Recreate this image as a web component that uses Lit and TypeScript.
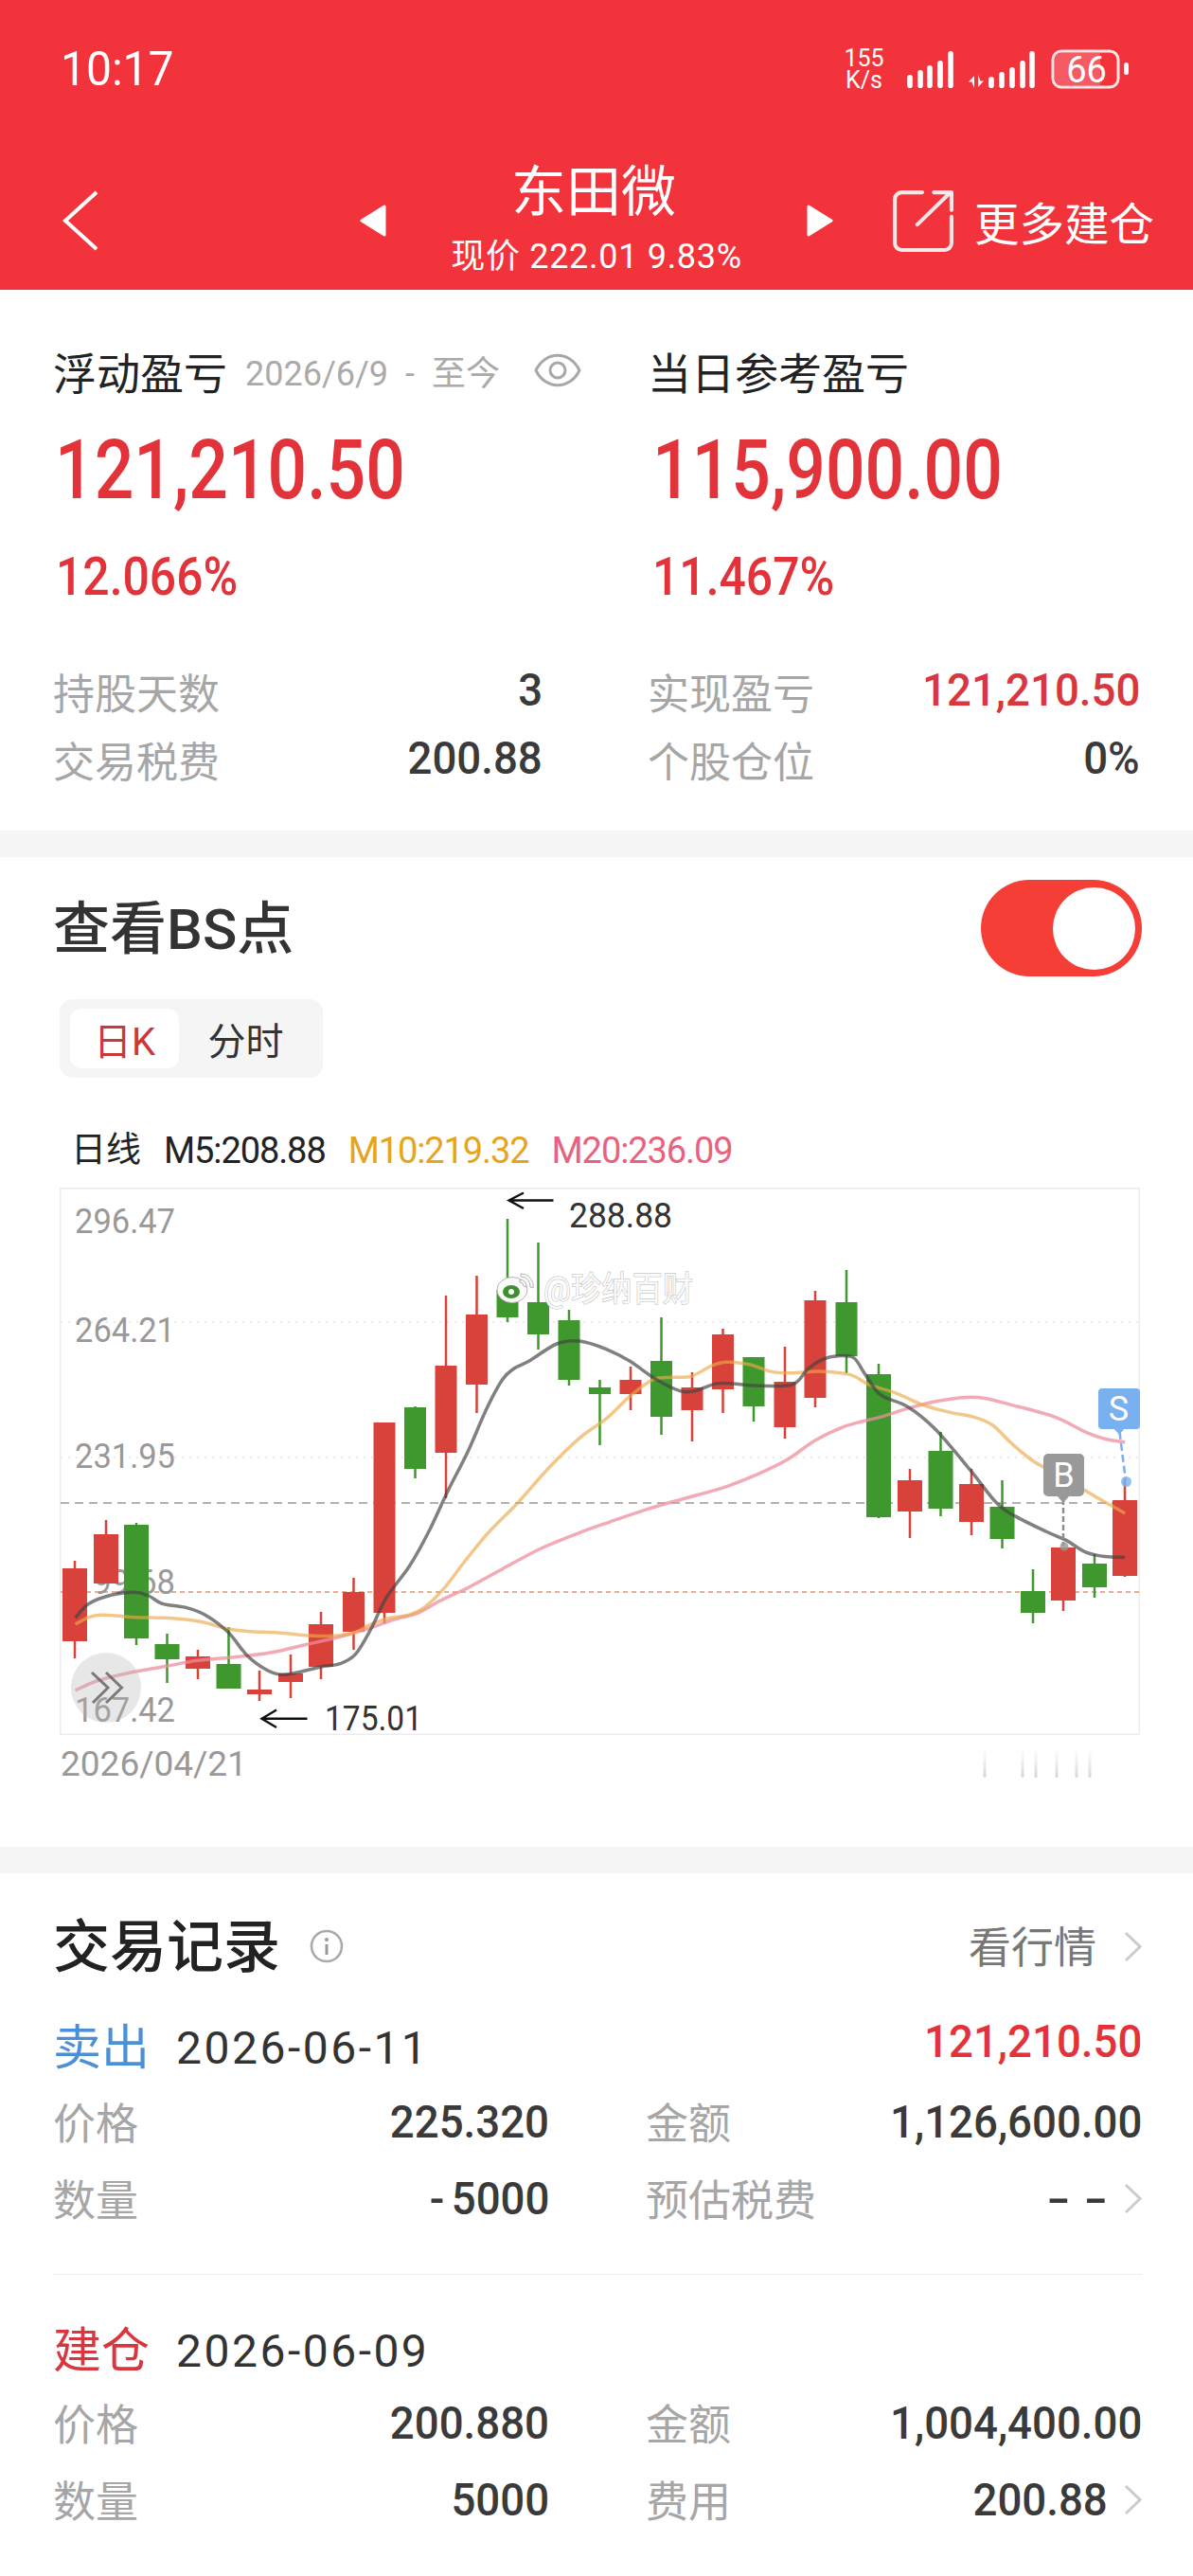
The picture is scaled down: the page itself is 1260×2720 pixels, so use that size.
import { LitElement, html, svg, css } from 'lit';
import { customElement } from 'lit/decorators.js';

type Pt = number[];

// reference crops of the chart: left half and right half
const L = (x: number, y: number): Pt => [x / 2.45, 1440 + y / 3];
const R = (x: number, y: number): Pt => [620 + x / 2.45, 1180 + y / 2.8];

// x, body top, body bottom, wick top, wick bottom, colour, body width
const CANDLES: [number, number, number, number, number, string, number][] = [
  [79, 1656, 1733, 1648, 1751, 'r', 26],
  [112, 1620, 1672, 1605, 1672, 'r', 26],
  [144, 1610, 1730, 1608, 1737, 'g', 26],
  [176.5, 1736, 1752, 1725, 1777, 'g', 26],
  [209, 1749, 1762, 1742, 1773, 'r', 26],
  [241.5, 1757, 1783, 1718, 1783, 'g', 26],
  [274, 1784, 1789, 1764, 1796, 'r', 26],
  [307, 1767, 1776, 1747, 1793, 'r', 26],
  [339, 1715, 1760, 1702, 1773, 'r', 26],
  [373.5, 1681, 1723, 1666, 1742, 'r', 23],
  [406, 1502, 1703, 1502, 1714, 'r', 23],
  [438.5, 1486, 1551, 1485, 1561, 'g', 23],
  [471, 1442, 1534, 1368, 1582, 'r', 23],
  [503.5, 1388, 1462, 1347, 1492, 'r', 23],
  [536, 1362, 1391, 1287, 1396, 'g', 23],
  [568.5, 1375, 1409, 1312, 1425, 'g', 23],
  [601, 1394, 1457, 1383, 1463, 'g', 23],
  [633.5, 1465, 1472, 1457, 1526, 'g', 23],
  [666, 1457, 1472, 1443, 1489, 'r', 23],
  [698.5, 1437, 1496, 1391, 1515, 'g', 23],
  [731, 1465, 1489, 1449, 1522, 'r', 23],
  [763.5, 1409, 1467, 1403, 1492, 'r', 23],
  [796, 1433, 1485, 1433, 1501, 'g', 23],
  [829, 1459, 1507, 1422, 1519, 'r', 23],
  [861, 1373, 1476, 1363, 1486, 'r', 23],
  [894, 1375, 1432, 1341, 1450, 'g', 23],
  [928, 1451, 1602, 1440, 1603, 'g', 26],
  [961, 1563, 1596, 1551, 1624, 'r', 26],
  [993.5, 1532, 1593, 1512, 1601, 'g', 26],
  [1026, 1567, 1607, 1551, 1621, 'r', 26],
  [1058.5, 1591, 1625, 1563, 1635, 'g', 26],
  [1091, 1680, 1703, 1657, 1714, 'g', 26],
  [1123, 1634, 1690, 1634, 1701, 'r', 26],
  [1156, 1651, 1676, 1641, 1687, 'g', 26],
  [1188, 1584, 1664, 1561, 1665, 'r', 26],
];

const M5: Pt[] = [
  L(195, 805), L(230, 760), L(290, 732), L(350, 724), L(385, 735), L(420, 760), L(480, 772), L(530, 795),
  L(590, 850), L(640, 925), L(690, 970), L(730, 985), L(780, 975), L(830, 960), L(880, 950), L(920, 920),
  L(960, 840), L(1000, 740), L(1060, 640), L(1110, 530), L(1160, 400), L(1210, 280), L(1260, 140), L(1300, 50),
  L(1330, 15), [559, 1437], [588, 1419], [612, 1416],
  R(50, 685), R(110, 720), R(180, 775), R(240, 808), R(280, 808), R(330, 788), R(370, 786), R(430, 792),
  R(530, 790), R(570, 745), R(610, 715), R(650, 705), R(690, 710), R(720, 760), R(760, 820), R(830, 855),
  R(900, 920), R(990, 1040), R(1060, 1140), R(1110, 1180), R(1190, 1225), R(1240, 1250), R(1290, 1285),
  R(1340, 1298), R(1392, 1300),
];

const M10: Pt[] = [
  L(195, 825), L(230, 803), L(260, 796), L(300, 798), L(350, 803), L(420, 805), L(480, 810), L(530, 820),
  L(590, 840), L(650, 848), L(720, 852), L(790, 860), L(860, 862), L(920, 850), L(960, 825), L(1010, 805),
  L(1060, 795), L(1100, 770), L(1150, 710), L(1200, 630), L(1260, 540), L(1340, 440), L(1420, 330), L(1500, 235),
  R(50, 890), R(110, 825), R(170, 775), R(220, 768), R(270, 765), R(320, 735), R(360, 723), R(420, 730),
  R(480, 752), R(540, 755), R(600, 750), R(680, 760), R(730, 790), R(800, 815), R(870, 850), R(940, 872),
  R(1000, 885), R(1050, 910), R(1100, 965), R(1160, 1020), R(1230, 1060), R(1300, 1110), R(1392, 1170),
];

const M20: Pt[] = [
  L(195, 1035), L(250, 1005), L(330, 980), L(430, 958), L(510, 940), L(600, 930), L(700, 915), L(790, 890),
  L(870, 868), L(950, 840), L(1020, 810), L(1080, 790), L(1140, 750), L(1210, 710), L(1300, 650), L(1400, 585),
  L(1500, 535), R(60, 1195), R(150, 1160), R(240, 1130), R(350, 1095), R(440, 1055), R(520, 1010), R(590, 955),
  R(670, 912), R(760, 885), R(830, 860), R(900, 840), R(980, 827), R(1030, 830), R(1100, 850), R(1210, 885),
  R(1290, 930), R(1340, 950), R(1392, 960),
];

// catmull-rom through the points, as cubic segments
function smooth(p: Pt[]): string {
  let d = `M${p[0][0].toFixed(1)} ${p[0][1].toFixed(1)}`;
  for (let i = 0; i < p.length - 1; i++) {
    const a = p[Math.max(i - 1, 0)];
    const b = p[i];
    const c = p[i + 1];
    const e = p[Math.min(i + 2, p.length - 1)];
    const c1 = [b[0] + (c[0] - a[0]) / 6, b[1] + (c[1] - a[1]) / 6];
    const c2 = [c[0] - (e[0] - b[0]) / 6, c[1] - (e[1] - b[1]) / 6];
    d += `C${c1[0].toFixed(1)} ${c1[1].toFixed(1)} ${c2[0].toFixed(1)} ${c2[1].toFixed(1)} ${c[0].toFixed(1)} ${c[1].toFixed(1)}`;
  }
  return d;
}

const AXIS: [string, number][] = [
  ['296.47', 1302],
  ['264.21', 1417],
  ['231.95', 1550],
  ['199.68', 1683],
  ['167.42', 1818],
];

const chevron = html`<svg class="chev" viewBox="0 0 19 33"><path d="M2 2L17 16.5L2 31" /></svg>`;

@customElement('app-root')
export class AppRoot extends LitElement {
  static styles = css`
    :host {
      display: block;
      width: 1260px;
      height: 2720px;
      background: #fff;
      font-family: Roboto, 'Noto Sans CJK SC', sans-serif;
      color: #333;
      overflow: hidden;
    }

    .n {
      display: inline-block;
      transform-origin: right center;
      transform: scaleX(0.95);
      white-space: nowrap;
    }

    .header {
      height: 306px;
      background: #f3333c;
      color: #fff;
      overflow: hidden;
    }
    .status {
      display: flex;
      align-items: center;
      height: 50px;
      margin-top: 48px;
      padding-left: 64px;
    }
    .time {
      font-size: 50px;
      line-height: 50px;
      transform: scaleX(0.96);
      transform-origin: left center;
    }
    .net {
      margin-left: auto;
      margin-right: 21px;
      font-size: 25px;
      line-height: 23px;
      text-align: center;
      width: 43px;
    }
    .status-icons {
      display: block;
      width: 240px;
      height: 48px;
      margin-right: 65px;
    }
    .nav {
      display: flex;
      align-items: center;
      height: 122px;
      margin-top: 74px;
    }
    .back {
      width: 38px;
      height: 64px;
      margin-left: 66px;
    }
    .tri {
      width: 28px;
      height: 34px;
      flex: none;
    }
    .tri.prev {
      margin-left: 276px;
    }
    .center {
      width: 444px;
      text-align: center;
    }
    .name {
      font-size: 58px;
      line-height: 70px;
      margin-top: -6px;
      margin-right: 6px;
    }
    .sub {
      font-size: 36px;
      line-height: 44px;
      margin-top: 11px;
      letter-spacing: 0.7px;
    }
    .share {
      width: 66px;
      height: 66px;
      margin-left: 62px;
      flex: none;
    }
    .more {
      font-size: 47.5px;
      margin-left: 21px;
      white-space: nowrap;
    }

    .band {
      height: 28px;
      background: #f5f5f5;
    }

    .summary {
      display: grid;
      grid-template-columns: 516px 519px;
      column-gap: 112px;
      padding: 55px 0 0 56px;
      height: 571px;
      box-sizing: border-box;
    }
    .cell {
      min-width: 0;
    }
    .cap {
      display: flex;
      align-items: center;
      height: 60px;
      font-size: 46px;
      color: #222;
      white-space: nowrap;
    }
    .since {
      font-size: 36px;
      color: #aaa;
      margin-left: 19px;
      word-spacing: 9px;
      flex: none;
    }
    .eye {
      width: 50px;
      height: 36px;
      margin-left: 36px;
      flex: none;
    }
    .big {
      height: 100px;
      margin-top: 25px;
      font-size: 87px;
      line-height: 100px;
      font-weight: 500;
      color: #e2333a;
      padding-left: 2px;
    }
    .big .n,
    .pct .n {
      transform-origin: left center;
    }
    .big .n {
      transform: scaleX(0.842);
    }
    .pct {
      height: 70px;
      margin-top: 28px;
      font-size: 56px;
      line-height: 70px;
      font-weight: 500;
      color: #e2333a;
      padding-left: 3px;
    }
    .pct .n {
      transform: scaleX(0.89);
    }
    .alt .big {
      padding-left: 5px;
    }
    .alt .pct {
      padding-left: 5px;
    }
    .stats {
      margin-top: 54px;
    }
    .stat {
      display: flex;
      justify-content: space-between;
      align-items: flex-start;
      height: 72px;
      font-size: 44px;
      line-height: 72px;
      color: #a6a6a6;
    }
    .stat b {
      font-size: 48px;
      line-height: 62px;
      font-weight: 500;
      color: #3a3a3a;
      margin-right: -1px;
    }
    .red {
      color: #d8373f !important;
    }

    .bs {
      height: 1045px;
      padding-top: 24px;
      box-sizing: border-box;
    }
    .bs-head {
      display: flex;
      align-items: center;
      justify-content: space-between;
      height: 102px;
      padding: 0 54px 0 56px;
    }
    .bs-title {
      font-size: 60px;
      font-weight: 500;
      color: #333;
      margin-top: -10px;
    }
    .toggle {
      display: flex;
      align-items: center;
      justify-content: flex-end;
      width: 170px;
      height: 102px;
      border-radius: 51px;
      background: #f43e36;
      padding-right: 7px;
      box-sizing: border-box;
    }
    .knob {
      width: 87px;
      height: 87px;
      border-radius: 50%;
      background: #fff;
    }
    .seg {
      display: flex;
      width: 278px;
      height: 83px;
      margin: 24px 0 0 63px;
      padding: 10px 11px;
      box-sizing: border-box;
      background: #f5f5f5;
      border-radius: 14px;
    }
    .tab {
      flex: 1;
      display: flex;
      align-items: center;
      justify-content: center;
      font-size: 40px;
      color: #333;
      border-radius: 12px;
    }
    .tab.on {
      flex: none;
      width: 115px;
      background: #fff;
      color: #c9383a;
    }
    .legend {
      display: flex;
      gap: 24px;
      height: 40px;
      margin-top: 57px;
      padding-left: 75px;
      font-size: 38px;
      line-height: 40px;
      letter-spacing: -1.1px;
      color: #222;
      white-space: nowrap;
    }
    .legend .cn {
      font-size: 37px;
      letter-spacing: 0;
    }
    .m10 {
      color: #e6a520;
    }
    .m20 {
      color: #e8627f;
    }
    .chart {
      display: block;
      width: 1141px;
      height: 578px;
      margin: 19px 0 0 63px;
    }
    .frame {
      fill: none;
      stroke: #ececec;
      stroke-width: 1.5;
    }
    .axis {
      font-size: 36px;
      fill: #999;
    }
    .note {
      font-size: 36px;
      fill: #333;
    }
    .mark {
      font-size: 36px;
      fill: #fff;
      text-anchor: middle;
    }
    .wm {
      font-size: 36px;
      fill: #fafafa;
      stroke: #b4b4b4;
      stroke-width: 1;
      paint-order: stroke;
    }
    .date-row {
      display: flex;
      justify-content: space-between;
      padding: 0 0 0 64px;
      height: 62px;
      font-size: 37px;
      line-height: 62px;
      color: #999;
    }
    .scrub {
      display: block;
      width: 120px;
      height: 36px;
      margin: 11px 104px 0 0;
    }

    .trades {
      padding: 47px 54px 0 56px;
    }
    .trades-head {
      display: flex;
      align-items: center;
      height: 60px;
    }
    .trades-title {
      font-size: 60px;
      font-weight: 500;
      color: #222;
      margin-top: -10px;
    }
    .info {
      width: 36px;
      height: 36px;
      margin-left: 31px;
    }
    .link {
      margin-left: auto;
      font-size: 45px;
      color: #777;
      margin-top: -4px;
    }
    .chev {
      display: block;
      width: 19px;
      height: 33px;
      flex: none;
      margin-left: 29px;
    }
    .chev path {
      fill: none;
      stroke: #ccc;
      stroke-width: 3;
    }
    .trade {
      padding-top: 48px;
    }
    .trade + .trade {
      border-top: 1.5px solid #eee;
      margin-top: 39px;
      padding-top: 51px;
    }
    .trade-head {
      display: flex;
      align-items: flex-start;
      height: 60px;
      line-height: 60px;
    }
    .kind {
      font-size: 51px;
      width: 130px;
    }
    .sell {
      color: #4a90d9;
    }
    .buy {
      color: #d8373f;
    }
    .day {
      font-size: 48px;
      letter-spacing: 2.5px;
      color: #333;
    }
    .profit {
      margin-left: auto;
      margin-top: -7px;
      font-size: 48px;
      font-weight: 500;
      color: #e2333a;
    }
    .rows {
      display: grid;
      grid-template-columns: 524px 524px;
      column-gap: 102px;
      margin-top: 7px;
    }
    .trade + .trade .rows {
      margin-top: 5px;
    }
    .row {
      display: flex;
      align-items: center;
      height: 81px;
      font-size: 45px;
      color: #a6a6a6;
      white-space: nowrap;
    }
    .row > span {
      margin-top: -3px;
    }
    .row b {
      margin-left: auto;
      font-size: 48px;
      font-weight: 500;
      color: #3a3a3a;
    }
    .row .chev {
      margin-left: 17px;
    }
    .minus {
      letter-spacing: 8px;
    }
    .dash {
      letter-spacing: 10px;
      transform: scaleX(1.5);
      margin-right: -15px;
    }
  `;

  private stat(label: string, value: string, red = false) {
    return html`<div class="stat">
      <span>${label}</span><b class=${red ? 'red' : ''}><span class="n">${value}</span></b>
    </div>`;
  }

  private row(label: string, value: string, more = false) {
    const text = value.startsWith('-') && value !== '--' ? html`<span class="minus">-</span>${value.slice(1)}` : value;
    return html`<div class="row">
      <span>${label}</span><b><span class="n ${value === '--' ? 'dash' : ''}">${text}</span></b>${more ? chevron : ''}
    </div>`;
  }

  private renderHeader() {
    return html`<div class="header">
      <div class="status">
        <span class="time">10:17</span>
        <div class="net">155<br />K/s</div>
        <svg class="status-icons" viewBox="955 48 240 48">
          <g fill="#fff">
            ${[[961, 78], [972, 73], [982, 68], [993, 63], [1004, 53]].map(
              ([x, y]) => svg`<rect x=${x - 2.8} y=${y} width="5.6" height=${92 - y} rx="2.8" />`,
            )}
            ${[[1047, 80], [1058, 75], [1069, 70], [1080, 63], [1090, 53]].map(
              ([x, y]) => svg`<rect x=${x - 2.8} y=${y} width="5.6" height=${92 - y} rx="2.8" />`,
            )}
            <path d="M1029 92V79l-6 6.5h3.5zM1033 78v13l6-6.5h-3.5z" />
            <rect x="1187" y="65" width="5" height="13" rx="2.5" />
          </g>
          <rect x="1112" y="53" width="69" height="38" rx="9" fill="none" stroke="#fde3e5" stroke-width="3" />
          <path d="M1121 55H1162V89H1121a7 7 0 0 1-7-7V62a7 7 0 0 1 7-7z" fill="#fff" opacity=".2" />
          <text x="1147.5" y="86" text-anchor="middle" font-size="38" fill="#fff">66</text>
        </svg>
      </div>
      <div class="nav">
        <svg class="back" viewBox="0 0 38 64">
          <path d="M36 2L3 32L36 62" fill="none" stroke="#fff" stroke-width="4" />
        </svg>
        <svg class="tri prev" viewBox="0 0 28 34">
          <path d="M26 2V32L2 17Z" fill="#fff" stroke="#fff" stroke-width="3" stroke-linejoin="round" />
        </svg>
        <div class="center">
          <div class="name">东田微</div>
          <div class="sub">现价 222.01 9.83%</div>
        </div>
        <svg class="tri" viewBox="0 0 28 34">
          <path d="M2 2V32L26 17Z" fill="#fff" stroke="#fff" stroke-width="3" stroke-linejoin="round" />
        </svg>
        <svg class="share" viewBox="0 0 64 64">
          <path
            d="M31 3H10a7 7 0 0 0-7 7V55a7 7 0 0 0 7 7H54a7 7 0 0 0 7-7V28M26 36L60 3M43 3H61V21"
            fill="none"
            stroke="#fde6e7"
            stroke-width="4"
            stroke-linecap="round"
            stroke-linejoin="round"
          />
        </svg>
        <span class="more">更多建仓</span>
      </div>
    </div>`;
  }

  private renderSummary() {
    return html`<div class="summary">
      <div class="cell">
        <div class="cap">
          浮动盈亏<span class="since">2026/6/9 - 至今</span>
          <svg class="eye" viewBox="0 0 50 36">
            <path d="M2 18C12-3 38-3 48 18C38 39 12 39 2 18Z" fill="none" stroke="#a8a8a8" stroke-width="3" />
            <circle cx="25" cy="18" r="8" fill="none" stroke="#a8a8a8" stroke-width="3" />
          </svg>
        </div>
        <div class="big"><span class="n">121,210.50</span></div>
        <div class="pct"><span class="n">12.066%</span></div>
        <div class="stats">${this.stat('持股天数', '3')} ${this.stat('交易税费', '200.88')}</div>
      </div>
      <div class="cell alt">
        <div class="cap">当日参考盈亏</div>
        <div class="big"><span class="n">115,900.00</span></div>
        <div class="pct"><span class="n">11.467%</span></div>
        <div class="stats">${this.stat('实现盈亏', '121,210.50', true)} ${this.stat('个股仓位', '0%')}</div>
      </div>
    </div>`;
  }

  private renderChart() {
    return html`<svg class="chart" viewBox="63 1254 1141 578">
      <rect class="frame" x="63.75" y="1254.75" width="1139.5" height="576.5" />
      <g stroke="#ececec" stroke-width="2" stroke-dasharray="2 6">
        <path d="M64 1396H1203M64 1539H1203" />
      </g>
      <path d="M64 1587H1203" stroke="#9a9a90" stroke-width="1.6" stroke-dasharray="9 6" />
      <path d="M64 1681H1203" stroke="#e2946c" stroke-width="1.6" stroke-dasharray="5 4" />
      ${AXIS.map(
        ([t, y]) => svg`<text class="axis" x="79" y=${y} textLength="106" lengthAdjust="spacingAndGlyphs">${t}</text>`,
      )}
      ${CANDLES.map(([x, top, bottom, wickTop, wickBottom, c, w]) => {
        const fill = c === 'r' ? '#d9423a' : '#3f982d';
        return svg`<rect x=${x - 1.25} y=${wickTop} width="2.5" height=${wickBottom - wickTop} fill=${fill} />
          <rect x=${x - w / 2} y=${top} width=${w} height=${bottom - top} fill=${fill} />`;
      })}
      <g fill="none" stroke-width="3.5" stroke-linejoin="round">
        <path d=${smooth(M20)} stroke="#ee8e9c" opacity=".75" />
        <path d=${smooth(M10)} stroke="#eba94a" opacity=".65" />
        <path d=${smooth(M5)} stroke="#444" opacity=".68" />
      </g>

      <path d="M553 1259.5L537.5 1267.5L553 1276M538 1267.5H584.5" fill="none" stroke="#111" stroke-width="2.4" />
      <text class="note" x="601" y="1296" textLength="109" lengthAdjust="spacingAndGlyphs">288.88</text>
      <path d="M292 1805.5L276.5 1814.7L292 1824M277 1814.7H324.5" fill="none" stroke="#111" stroke-width="2.4" />
      <text class="note" x="343" y="1827" textLength="103" lengthAdjust="spacingAndGlyphs">175.01</text>

      <circle cx="112" cy="1782" r="37" fill="#b4b4b4" opacity=".32" />
      <path d="M97 1766L114 1782L98 1798M112 1766L128.5 1782L112 1798" fill="none" stroke="#666" stroke-width="3" opacity=".85" />

      <path d="M1123 1583V1632" stroke="#8c8c8c" stroke-width="2.5" stroke-dasharray="6 3" />
      <circle cx="1124" cy="1633" r="4.5" fill="#999" opacity=".8" />
      <path d="M1123 1587L1117 1580H1129Z" fill="#999" />
      <rect x="1102" y="1535" width="43" height="45" rx="5" fill="#999" />
      <text class="mark" x="1123.5" y="1570">B</text>

      <path d="M1182.5 1512L1189 1564" stroke="#7ab0ef" stroke-width="2.5" stroke-dasharray="8 4" />
      <circle cx="1189.5" cy="1564.5" r="5.5" fill="#7ab0ef" opacity=".8" />
      <path d="M1182 1515L1176 1508H1188Z" fill="#78b0f0" />
      <rect x="1160" y="1466" width="44" height="43" rx="4" fill="#78b0f0" />
      <text class="mark" x="1181.5" y="1500">S</text>

      <g fill="#fafafa" stroke="#b4b4b4" stroke-width="1">
        <ellipse cx="541" cy="1362" rx="16" ry="13.5" />
        <path d="M550 1345a13 13 0 0 1 13 15l-3-1a10 10 0 0 0-10-11zM549 1351a7 7 0 0 1 7 8l-3-1a4 4 0 0 0-4-4z" />
      </g>
      <ellipse cx="540" cy="1364" rx="9" ry="7" fill="#3f8f30" />
      <circle cx="540" cy="1364" r="3" fill="#fafafa" />
      <text class="wm" x="574" y="1374" textLength="158" lengthAdjust="spacingAndGlyphs">@珍纳百财</text>
    </svg>`;
  }

  private renderTrade(kind: string, cls: string, day: string, profit: string, rows: unknown) {
    return html`<div class="trade">
      <div class="trade-head">
        <span class="kind ${cls}">${kind}</span>
        <span class="day">${day}</span>
        ${profit ? html`<span class="profit"><span class="n">${profit}</span></span>` : ''}
      </div>
      <div class="rows">${rows}</div>
    </div>`;
  }

  render() {
    return html`
      ${this.renderHeader()} ${this.renderSummary()}
      <div class="band"></div>
      <div class="bs">
        <div class="bs-head">
          <span class="bs-title">查看BS点</span>
          <div class="toggle"><div class="knob"></div></div>
        </div>
        <div class="seg">
          <div class="tab on">日K</div>
          <div class="tab">分时</div>
        </div>
        <div class="legend">
          <span class="cn">日线</span><span>M5:208.88</span><span class="m10">M10:219.32</span
          ><span class="m20">M20:236.09</span>
        </div>
        ${this.renderChart()}
        <div class="date-row">
          <span>2026/04/21</span>
          <svg class="scrub" viewBox="1036 1843 120 36">
            <defs>
              <linearGradient id="fade" x1="0" y1="0" x2="0" y2="1">
                <stop offset="0" stop-color="#ddd" stop-opacity="0" />
                <stop offset="1" stop-color="#ccc" stop-opacity=".8" />
              </linearGradient>
            </defs>
            ${[1040, 1080, 1094, 1116, 1137, 1151].map(
              (x) => svg`<rect x=${x - 1.5} y="1845" width="3" height="32" rx="1.5" fill="url(#fade)" />`,
            )}
          </svg>
        </div>
      </div>
      <div class="band"></div>
      <div class="trades">
        <div class="trades-head">
          <span class="trades-title">交易记录</span>
          <svg class="info" viewBox="0 0 36 36">
            <circle cx="18" cy="18" r="16" fill="none" stroke="#aaa" stroke-width="2.6" />
            <circle cx="18" cy="11" r="2" fill="#999" />
            <path d="M18 16V27" stroke="#999" stroke-width="3" />
          </svg>
          <span class="link">看行情</span>
          ${chevron}
        </div>
        ${this.renderTrade(
          '卖出',
          'sell',
          '2026-06-11',
          '121,210.50',
          html`${this.row('价格', '225.320')} ${this.row('金额', '1,126,600.00')} ${this.row('数量', '-5000')}
          ${this.row('预估税费', '--', true)}`,
        )}
        ${this.renderTrade(
          '建仓',
          'buy',
          '2026-06-09',
          '',
          html`${this.row('价格', '200.880')} ${this.row('金额', '1,004,400.00')} ${this.row('数量', '5000')}
          ${this.row('费用', '200.88', true)}`,
        )}
      </div>
    `;
  }
}
